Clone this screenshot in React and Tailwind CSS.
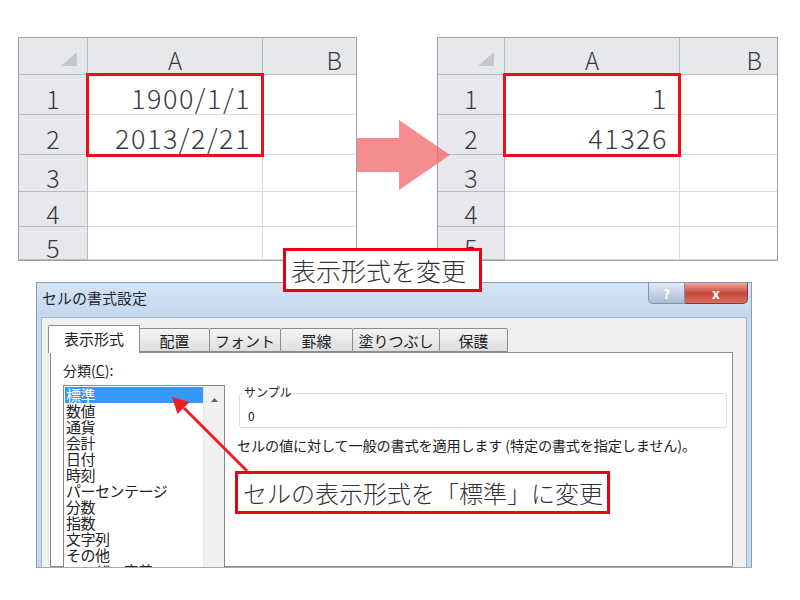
import { Fragment } from 'react';

const jp = "font-['Noto_Sans_CJK_JP','Noto_Sans',sans-serif]";
const ROWS = ['1', '2', '3', '4', '5'];
const CATEGORIES = ['標準', '数値', '通貨', '会計', '日付', '時刻', 'パーセンテージ', '分数', '指数', '文字列', 'その他', 'ユーザー定義'];
const TABS = [
  { label: '配置', w: 'w-[71px]' },
  { label: 'フォント', w: 'w-[72px]' },
  { label: '罫線', w: 'w-[73px]' },
  { label: '塗りつぶし', w: 'w-[88px]' },
  { label: '保護', w: 'w-[69px]' },
];

const Sheet = ({ values, colsClass, redClass, bPad }) => {
  return (
    <div className="relative border border-[#9ea2a7] bg-white">
      <div className={`grid ${colsClass} grid-rows-[37px_40px_40px_37px_35px_33px] text-[#3a3a3a] leading-none font-light`}>
        <div className="relative bg-[#e6e8ec] border-r border-b border-[#b7bcc2]">
          <svg width="16" height="14" viewBox="0 0 16 14" className="absolute right-[10px] bottom-[8px]">
            <polygon points="16,0 16,14 0,14" fill="#c4c7cc" />
          </svg>
        </div>
        <div className="bg-[#e6e8ec] border-r border-b border-[#b7bcc2] flex items-center justify-center pt-[7px] text-[24px]">A</div>
        <div className={`bg-[#e6e8ec] border-b border-[#b7bcc2] flex items-center justify-end pt-[7px] text-[24px] ${bPad}`}>B</div>
        {ROWS.map((r, i) => (
          <Fragment key={r}>
            <div className="bg-[#e6e8ec] border-r border-b border-[#b7bcc2] flex items-center justify-center pt-[8px] text-[25px]">{r}</div>
            <div className="border-r border-b border-[#d9dbde] flex items-center justify-end pr-[11px] pt-[5px] text-[27px] tracking-[1.5px] tabular-nums">{values[i]}</div>
            <div className="border-b border-[#d9dbde]" />
          </Fragment>
        ))}
      </div>
      <div className={`absolute top-[35px] ${redClass} w-[178px] h-[84px] border-[3px] border-[#e8101a]`} />
    </div>
  );
};

const Dialog = () => {
  return (
    <div className={`ml-[36px] mt-[21px] w-[716px] h-[286px] overflow-hidden flex flex-col border border-[#8a9db3] border-b-[#a8a8a8] bg-[#c6daef] ${jp}`}>
      {/* title bar */}
      <div className="h-[34px] shrink-0 flex items-start justify-between bg-linear-to-b from-[#d3e4f5] to-[#c3d7ed]">
        <div className="pl-[5px] pt-[7px] text-[15px] leading-none text-[#1f2a36]">セルの書式設定</div>
        <div className="flex mr-[3px] -mt-[1px]">
          <div className="w-[37px] h-[22px] rounded-bl-[5px] border border-[#7f93ab] bg-linear-to-b from-[#e3ecf5] to-[#a8bdd4] flex items-center justify-center text-[13px] font-bold text-white leading-none">?</div>
          <div className="w-[63px] h-[22px] rounded-br-[5px] border border-l-0 border-[#8e3a33] bg-linear-to-b from-[#e9a89d] via-[#c8463b] to-[#d86e5f] flex items-center justify-center text-[14px] font-bold text-white leading-none">x</div>
        </div>
      </div>
      {/* client area */}
      <div className="flex-1 flex px-[4px] min-h-0">
        <div className="flex-1 flex flex-col bg-[#f0f0f0] border-t border-x border-[#a5b6ca] pt-[7px] min-h-0">
          <div className="flex items-end h-[27px] pl-[6px] text-[15px] leading-none text-[#222]">
            <div className="relative z-10 w-[92px] h-[28px] -mb-[1px] bg-white border border-b-0 border-[#898c95] rounded-t-[2px] flex items-center justify-center pb-[2px]">表示形式</div>
            {TABS.map((t) => (
              <div key={t.label} className={`${t.w} h-[24px] -ml-[1px] border border-[#898c95] rounded-t-[2px] bg-linear-to-b from-[#f5f5f5] to-[#dedede] flex items-center justify-center`}>
                {t.label}
              </div>
            ))}
          </div>
          <div className="ml-[8px] w-[683px] flex-1 bg-white border border-[#898c95] pl-[12px] pt-[9px] text-[#222] min-h-0">
            <div className="text-[14px] leading-[16px]">分類(<span className="underline">C</span>):</div>
            <div className="flex mt-[7px]">
              <div className="w-[162px] h-[200px] border border-[#828790] bg-white flex">
                <div className="flex-1 pt-[1px] pl-[1px] text-[15px] leading-[16px] tracking-[-0.5px]">
                  {CATEGORIES.map((c, i) => (
                    <div key={c} className={i === 0 ? 'h-[16px] bg-[#3399ff] text-white pl-[1px]' : 'h-[16px] pl-[1px]'}>{c}</div>
                  ))}
                </div>
                <div className="w-[21px] bg-[#f0f0f0] border-l border-[#e4e4e4] flex justify-center pt-[12px]">
                  <svg width="7" height="4" viewBox="0 0 7 4">
                    <polygon points="3.5,0 7,4 0,4" fill="#606060" />
                  </svg>
                </div>
              </div>
              <div className="ml-[12px] pt-[8px]">
                <div className="relative ml-[2px] w-[488px] h-[35px] border border-[#dcdcdc] rounded-[3px]">
                  <div className="absolute -top-[8px] left-[3px] bg-white px-[1px] text-[12px] leading-none">サンプル</div>
                  <div className="pl-[8px] pt-[16px] text-[12px] leading-none">0</div>
                </div>
                <div className="mt-[9px] text-[14.2px] leading-[16px] tracking-[-0.2px] whitespace-nowrap">セルの値に対して一般の書式を適用します (特定の書式を指定しません)。</div>
              </div>
            </div>
          </div>
        </div>
      </div>
    </div>
  );
};

export default function App() {
  return (
    <div className={`relative w-[800px] h-[600px] overflow-hidden bg-white ${jp}`}>
      <div className="flex pt-[37px] pl-[18px] gap-[80px]">
        <Sheet values={['1900/1/1', '2013/2/21', '', '', '']} colsClass="grid-cols-[69px_175px_93px]" redClass="left-[67px]" bPad="pr-[14px]" />
        <Sheet values={['1', '41326', '', '', '']} colsClass="grid-cols-[67px_175px_97px]" redClass="left-[65px]" bPad="pr-[15px]" />
      </div>
      <Dialog />

      {/* arrows drawn over the content */}
      <svg className="absolute inset-0 pointer-events-none" width="800" height="600" viewBox="0 0 800 600">
        <polygon points="357,138 399,138 399,120 450,155 399,190 399,172 357,172" fill="#f2676b" fillOpacity="0.75" />
        <line x1="247" y1="471" x2="184" y2="408" stroke="#ee1c25" strokeWidth="3" />
        <polygon points="172,397 189.5,402 177.5,414" fill="#ee1c25" />
      </svg>

      <div className="absolute left-[283px] top-[248px] w-[199px] h-[44px] border-[3px] border-[#e60012] bg-white flex items-center pl-[5px] text-[25px] leading-none text-[#333] font-light">
        表示形式を変更
      </div>
      <div className="absolute left-[235px] top-[471px] w-[375px] h-[43px] border-[3px] border-[#e60012] bg-white flex items-center pl-[5px] text-[24px] leading-none text-[#333] font-light">
        セルの表示形式を「標準」に変更
      </div>
    </div>
  );
}
